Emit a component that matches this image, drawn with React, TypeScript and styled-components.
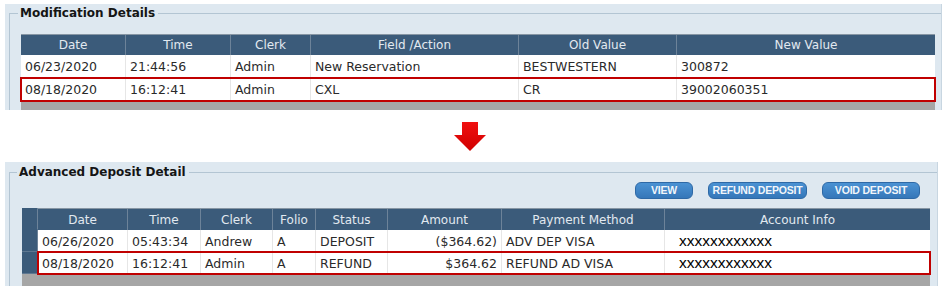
import styled, { createGlobalStyle, css } from "styled-components";

const GlobalStyle = createGlobalStyle`
  html, body {
    margin: 0;
    padding: 0;
    background: #ffffff;
  }
  body {
    width: 949px;
    height: 286px;
    overflow: hidden;
    font-family: "DejaVu Sans", Verdana, sans-serif;
  }
`;

type Col = {
  title: string;
  width: number;
  align?: "left" | "right";
  code?: boolean;
};

const modCols: Col[] = [
  { title: "Date", width: 104 },
  { title: "Time", width: 105 },
  { title: "Clerk", width: 80 },
  { title: "Field /Action", width: 208 },
  { title: "Old Value", width: 158 },
  { title: "New Value", width: 259 },
];

const modRows = [
  ["06/23/2020", "21:44:56", "Admin", "New Reservation", "BESTWESTERN", "300872"],
  ["08/18/2020", "16:12:41", "Admin", "CXL", "CR", "39002060351"],
];

const depCols: Col[] = [
  { title: "Date", width: 89 },
  { title: "Time", width: 73 },
  { title: "Clerk", width: 72 },
  { title: "Folio", width: 43 },
  { title: "Status", width: 72 },
  { title: "Amount", width: 114, align: "right" },
  { title: "Payment Method", width: 163 },
  { title: "Account Info", width: 266, code: true },
];

const depRows = [
  ["06/26/2020", "05:43:34", "Andrew", "A", "DEPOSIT", "($364.62)", "ADV DEP VISA", "xxxxxxxxxxxx"],
  ["08/18/2020", "16:12:41", "Admin", "A", "REFUND", "$364.62", "REFUND AD VISA", "xxxxxxxxxxxx"],
];

const Page = styled.div`
  display: flex;
  flex-direction: column;
  padding-top: 4px;
`;

const Panel = styled.section<{ $width: number; $height: number; $padTop: number }>`
  box-sizing: border-box;
  width: ${(p) => p.$width}px;
  height: ${(p) => p.$height}px;
  margin-left: 5px;
  padding: ${(p) => p.$padTop}px 0 0 4px;
  background: #dee8f0;
  border-right: 1px solid #c8d6e1;
  overflow: hidden;
`;

const Group = styled.fieldset<{ $padTop: number; $padLeft: number }>`
  margin: 0;
  min-width: 0;
  height: 100%;
  box-sizing: border-box;
  padding: ${(p) => p.$padTop}px 0 0 ${(p) => p.$padLeft}px;
  border: 0;
  border-top: 1px solid #b3c5d3;
  border-left: 1px solid #b3c5d3;
  display: flex;
  flex-direction: column;
`;

const Legend = styled.legend<{ $shift: number }>`
  margin-left: ${(p) => p.$shift}px;
  padding: 0 3px 0 2px;
  font-size: 12px;
  line-height: 16px;
  font-weight: bold;
  color: #151515;
`;

const Toolbar = styled.div`
  display: flex;
  justify-content: flex-end;
  gap: 13px;
  padding-right: 17px;
  margin-bottom: 9px;
`;

const ActionButton = styled.button<{ $width: number }>`
  width: ${(p) => p.$width}px;
  height: 17px;
  padding: 0;
  border: 1px solid #2e69a6;
  border-radius: 6px;
  background: linear-gradient(#4b92d3, #3577b9);
  color: #f2f6fa;
  font-family: "Liberation Sans", Arial, sans-serif;
  font-size: 10.5px;
  font-weight: bold;
  letter-spacing: -0.2px;
  line-height: 15px;
  & + & {
    margin-left: 2px;
  }
`;

const Table = styled.div<{ $width: number }>`
  width: ${(p) => p.$width}px;
  flex: 1;
  display: flex;
  flex-direction: column;
  background: #a6a6a6;
`;

const Line = styled.div<{ $height: number }>`
  display: flex;
  height: ${(p) => p.$height}px;
`;

const Selector = styled.div<{ $head?: boolean }>`
  width: 16px;
  flex: none;
  box-sizing: border-box;
  background: #3b5b7a;
  border-bottom: 1px solid ${(p) => (p.$head ? "#3b5b7a" : "#5f7891")};
  border-right: 1px solid #6d8399;
`;

const Cells = styled.div<{ $cols: string; $head?: boolean; $marked?: boolean }>`
  flex: 1;
  display: grid;
  grid-template-columns: ${(p) => p.$cols};
  box-sizing: border-box;
  ${(p) =>
    p.$head
      ? css`
          background: #3b5b7a;
          border-top: 1px solid #8796a4;
        `
      : css`
          background: #ffffff;
          border-bottom: 1px solid #d6d6d6;
        `}
  ${(p) =>
    p.$marked &&
    css`
      outline: 2px solid #c00000;
      outline-offset: -1px;
      position: relative;
    `}
`;

const HeadCell = styled.div`
  font-size: 12px;
  color: #e2e9f0;
  text-align: center;
  display: flex;
  align-items: center;
  justify-content: center;
  border-left: 1px solid #6d8399;
  &:first-child {
    border-left: 0;
  }
`;

const Cell = styled.div<{ $align?: "left" | "right"; $code?: boolean }>`
  display: flex;
  align-items: center;
  justify-content: ${(p) => (p.$align === "right" ? "flex-end" : "flex-start")};
  padding: 1px 4px 0;
  white-space: nowrap;
  overflow: hidden;
  border-left: 1px solid #e6e6e6;
  font-size: 12.5px;
  color: #2a2a2a;
  &:first-child {
    border-left: 0;
  }
  ${(p) =>
    p.$code &&
    css`
      padding-left: 14px;
      font-family: "Liberation Sans", Arial, sans-serif;
      font-size: 15.5px;
      color: #000000;
    `}
`;

const ArrowRow = styled.div`
  height: 52px;
  box-sizing: border-box;
  padding: 12px 10px 0 0;
  display: flex;
  justify-content: center;
`;

function GridTable({
  cols,
  rows,
  selector,
  marked,
  headHeight,
  rowHeight,
}: {
  cols: Col[];
  rows: string[][];
  selector?: boolean;
  marked: number;
  headHeight: number;
  rowHeight: number;
}) {
  const template = cols.map((c) => `${c.width}px`).join(" ");
  const width = cols.reduce((s, c) => s + c.width, 0) + (selector ? 16 : 0);
  return (
    <Table $width={width}>
      <Line $height={headHeight}>
        {selector && <Selector $head />}
        <Cells $cols={template} $head>
          {cols.map((c) => (
            <HeadCell key={c.title}>{c.title}</HeadCell>
          ))}
        </Cells>
      </Line>
      {rows.map((r, i) => (
        <Line key={i} $height={rowHeight}>
          {selector && <Selector />}
          <Cells $cols={template} $marked={i === marked}>
            {r.map((v, j) => (
              <Cell key={j} $align={cols[j].align} $code={cols[j].code}>
                {v}
              </Cell>
            ))}
          </Cells>
        </Line>
      ))}
    </Table>
  );
}

function DownArrow() {
  return (
    <svg width="32" height="30" viewBox="0 0 32 30">
      <defs>
        <linearGradient id="arrowFill" x1="0" y1="0" x2="0" y2="1">
          <stop offset="0" stopColor="#f01010" />
          <stop offset="1" stopColor="#d00000" />
        </linearGradient>
      </defs>
      <polygon points="8,0 24,0 24,13 32,13 16,29 0,13 8,13" fill="url(#arrowFill)" />
    </svg>
  );
}

export default function App() {
  return (
    <>
      <GlobalStyle />
      <Page>
        <Panel $width={937} $height={106} $padTop={1}>
          <Group $padTop={13} $padLeft={11}>
            <Legend $shift={-3}>Modification Details</Legend>
            <GridTable cols={modCols} rows={modRows} marked={1} headHeight={21} rowHeight={23} />
          </Group>
        </Panel>
        <ArrowRow>
          <DownArrow />
        </ArrowRow>
        <Panel $width={933} $height={130} $padTop={2}>
          <Group $padTop={2} $padLeft={12}>
            <Legend $shift={-5}>Advanced Deposit Detail</Legend>
            <Toolbar>
              <ActionButton $width={58}>VIEW</ActionButton>
              <ActionButton $width={99}>REFUND DEPOSIT</ActionButton>
              <ActionButton $width={98}>VOID DEPOSIT</ActionButton>
            </Toolbar>
            <GridTable cols={depCols} rows={depRows} selector marked={1} headHeight={22} rowHeight={22} />
          </Group>
        </Panel>
      </Page>
    </>
  );
}
